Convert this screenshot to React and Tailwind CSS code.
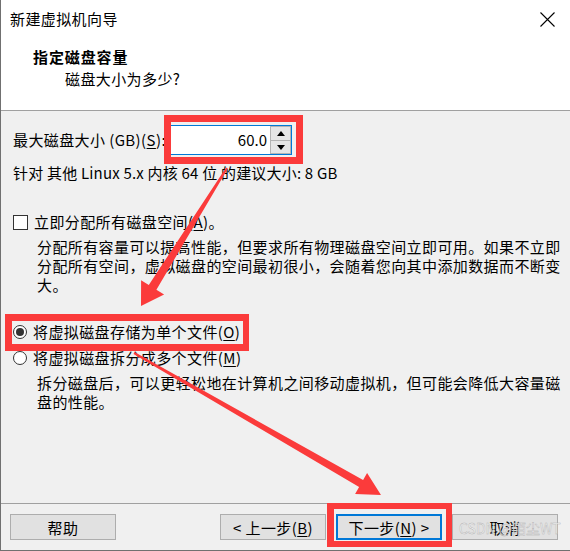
import React from 'react';

const font = { fontFamily: '"Noto Sans CJK SC", "Noto Sans", sans-serif' };

const Key = ({ children }) => <span className="underline underline-offset-2 decoration-1">{children}</span>;

const Button = ({ children, focused }) => (
  <button
    className={
      focused
        ? 'w-[106px] h-[26px] bg-[#e1e1e1] border-2 border-[#0078d7] text-[15px] text-black leading-none flex items-center justify-center'
        : 'w-[106px] h-[26px] bg-[#e1e1e1] border border-[#adadad] text-[15px] text-black leading-none flex items-center justify-center'
    }
  >
    {children}
  </button>
);

const Spinner = () => (
  <div className="w-[21px] flex flex-col border border-[#b4b4b4] bg-[#e6e6e6]">
    <div className="h-[14px] flex items-center justify-center border-b border-[#b4b4b4]">
      <svg width="8" height="5" viewBox="0 0 8 5"><path d="M0 5 L4 0 L8 5 Z" fill="#000" /></svg>
    </div>
    <div className="flex-1 flex items-center justify-center">
      <svg width="8" height="5" viewBox="0 0 8 5"><path d="M0 0 L8 0 L4 5 Z" fill="#000" /></svg>
    </div>
  </div>
);

const Annotations = () => (
  <>
    <div className="absolute left-[163px] top-[115px] w-[139px] h-[49px] border-[7px] border-[#fb3b3b]" />
    <div className="absolute left-[4px] top-[314px] w-[244px] h-[37px] border-[7px] border-r-[6px] border-[#fb3b3b]" />
    <div className="absolute left-[326px] top-[503px] w-[125px] h-[44px] border-[6px] border-l-[7px] border-[#fb3b3b]" />
    <svg className="absolute inset-0 pointer-events-none" width="570" height="551" viewBox="0 0 570 551">
      <polygon
        fill="#fb3b3b"
        points="226.9,168.5 155.4,289.7 163.1,294.4 140,306 140.1,280.2 147.8,284.9 225.1,167.5"
      />
      <polygon
        fill="#fb3b3b"
        points="133.5,352.1 362.1,480 366.1,473.1 380,495 354.1,493.9 358.1,487 132.5,353.9"
      />
    </svg>
    {/* watermark */}
    <div className="absolute left-[458px] top-[518px] text-[14px] leading-[20px] tracking-normal text-white/70 whitespace-nowrap [-webkit-text-stroke:0.4px_#b0b0b0]">
      CSDN @陌尘WT
    </div>
  </>
);

export default function App() {
  return (
    <div
      style={font}
      className="relative w-[570px] h-[551px] bg-[#f0f0f0] border-l border-b border-[#707070] flex flex-col text-black text-[15px] tracking-[0.4px]"
    >
      {/* title bar */}
      <div className="h-[38px] bg-white flex items-center justify-between pl-[9px] pr-[15px]">
        <span className="leading-[20px]">新建虚拟机向导</span>
        <svg width="15" height="15" viewBox="0 0 15 15">
          <path d="M0.5 0.5 L14.5 14.5 M14.5 0.5 L0.5 14.5" stroke="#000" strokeWidth="1.1" />
        </svg>
      </div>

      {/* header */}
      <div className="h-[73px] bg-white border-b border-[#a0a0a0] pt-[9px] pl-[32px]">
        <div className="font-bold leading-[20px] tracking-[0.9px]">指定磁盘容量</div>
        <div className="leading-[20px] pl-[32px] mt-[2px]">磁盘大小为多少?</div>
      </div>

      {/* body */}
      <div className="flex-1 pl-[12px] pt-[14px]">
        <div className="flex items-center h-[30px]">
          <span className="w-[155px] whitespace-nowrap leading-[20px]">
            最大磁盘大小 (GB)(<Key>S</Key>):
          </span>
          <div className="w-[124px] h-[30px] bg-white border border-[#0078d7] flex">
            <div className="flex-1 flex items-center justify-end pr-[3px] tracking-normal">60.0</div>
            <Spinner />
          </div>
        </div>

        <div className="mt-[8px] leading-[20px] whitespace-nowrap tracking-[0.2px]">
          针对 其他 Linux 5.x 内核 64 位 的建议大小: 8 GB
        </div>

        <div className="mt-[29px] flex items-center h-[20px] gap-[6px]">
          <div className="w-[15px] h-[15px] bg-white border border-[#333]" />
          <span className="whitespace-nowrap">
            立即分配所有磁盘空间(<Key>A</Key>)。
          </span>
        </div>
        <div className="mt-[5px] pl-[24px] leading-[19px] whitespace-nowrap">
          <div>分配所有容量可以提高性能，但要求所有物理磁盘空间立即可用。如果不立即</div>
          <div>分配所有空间，虚拟磁盘的空间最初很小，会随着您向其中添加数据而不断变</div>
          <div>大。</div>
        </div>

        <div className="mt-[28px] flex items-center h-[20px] gap-[6px]">
          <div className="w-[14px] h-[14px] rounded-full bg-white border border-[#333] flex items-center justify-center">
            <div className="w-[8px] h-[8px] rounded-full bg-[#333]" />
          </div>
          <span className="whitespace-nowrap">
            将虚拟磁盘存储为单个文件(<Key>O</Key>)
          </span>
        </div>
        <div className="mt-[6px] flex items-center h-[20px] gap-[6px]">
          <div className="w-[14px] h-[14px] rounded-full bg-white border border-[#333]" />
          <span className="whitespace-nowrap">
            将虚拟磁盘拆分成多个文件(<Key>M</Key>)
          </span>
        </div>
        <div className="mt-[5px] pl-[24px] leading-[19px] whitespace-nowrap">
          <div>拆分磁盘后，可以更轻松地在计算机之间移动虚拟机，但可能会降低大容量磁</div>
          <div>盘的性能。</div>
        </div>
      </div>

      {/* footer */}
      <div className="h-[47px] border-t border-[#a0a0a0] flex items-start pt-[10px] pl-[9px] pr-[12px]">
        <Button>帮助</Button>
        <div className="flex-1" />
        <div className="flex gap-[10px]">
          <Button>&lt; 上一步(<Key>B</Key>)</Button>
          <Button focused>下一步(<Key>N</Key>) &gt;</Button>
          <Button>取消</Button>
        </div>
      </div>

      <Annotations />
    </div>
  );
}
